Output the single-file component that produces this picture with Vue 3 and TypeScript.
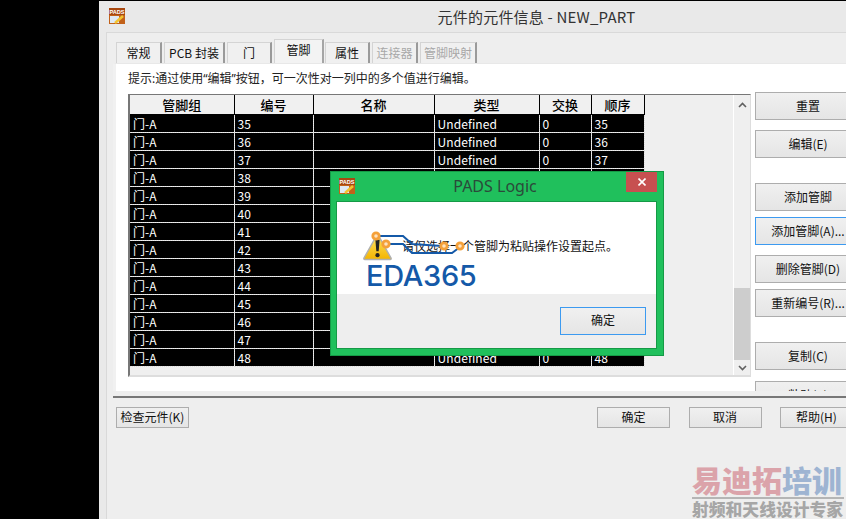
<script setup lang="ts">
interface Tab { label: string; width: number; active?: boolean; disabled?: boolean }
const tabs: Tab[] = [
  { label: '常规', width: 46 },
  { label: 'PCB 封装', width: 61 },
  { label: '门', width: 45 },
  { label: '管脚', width: 50, active: true },
  { label: '属性', width: 45 },
  { label: '连接器', width: 46, disabled: true },
  { label: '管脚映射', width: 57, disabled: true },
]
const columns = ['管脚组', '编号', '名称', '类型', '交换', '顺序']
const pins = Array.from({ length: 14 }, (_, i) => String(35 + i))
const sideButtons = [
  { label: '重置', cls: '' },
  { label: '编辑(E)', cls: 'g10' },
  { label: '添加管脚', cls: 'g25' },
  { label: '添加管脚(A)...', cls: 'g6 focus' },
  { label: '删除管脚(D)', cls: 'g10' },
  { label: '重新编号(R)...', cls: 'g6' },
  { label: '复制(C)', cls: 'g25' },
  { label: '粘贴(P)', cls: 'g11' },
]
</script>

<template>
  <div class="screen">
    <div class="backdrop"></div>
    <div class="window">
      <div class="titlebar">
        <svg class="pads" viewBox="0 0 16 16" width="16" height="16">
          <rect width="16" height="16" fill="#c2611a" />
          <rect x="0" y="0" width="16" height="7" fill="#a9480f" />
          <text x="8" y="6" text-anchor="middle" font-size="5.6" font-weight="700" fill="#fff" font-family="Liberation Sans, sans-serif">PADS</text>
          <rect x="1" y="8" width="9" height="7" fill="#dfe9f5" />
          <path d="M6 15 L14 8" stroke="#f4c430" stroke-width="2.5" />
        </svg>
        <span class="title">元件的元件信息 - NEW_PART</span>
      </div>
      <div class="client">
        <div class="tabs">
          <div
            v-for="t in tabs"
            :key="t.label"
            class="tab"
            :class="{ active: t.active, disabled: t.disabled }"
            :style="{ width: t.width + 'px' }"
          >{{ t.label }}</div>
        </div>
        <div class="panel">
          <div class="panel-body">
            <p class="hint">提示:通过使用“编辑”按钮，可一次性对一列中的多个值进行编辑。</p>
            <div class="content">
              <div class="frame">
                <div class="grid-area">
                  <table class="grid">
                    <colgroup>
                      <col class="c1" /><col class="c2" /><col class="c3" />
                      <col class="c4" /><col class="c5" /><col class="c6" />
                    </colgroup>
                    <thead>
                      <tr><th v-for="c in columns" :key="c">{{ c }}</th></tr>
                    </thead>
                    <tbody>
                      <tr v-for="p in pins" :key="p">
                        <td>门-A</td>
                        <td>{{ p }}</td>
                        <td></td>
                        <td>Undefined</td>
                        <td>0</td>
                        <td>{{ p }}</td>
                      </tr>
                    </tbody>
                  </table>
                </div>
                <div class="scrollbar">
                  <svg class="arrow up" viewBox="0 0 9 6" width="9" height="6"><path d="M1 5 L4.5 1.5 L8 5" fill="none" stroke="#606060" stroke-width="1.6" /></svg>
                  <div class="track"><div class="thumb"></div></div>
                  <svg class="arrow down" viewBox="0 0 9 6" width="9" height="6"><path d="M1 1 L4.5 4.5 L8 1" fill="none" stroke="#606060" stroke-width="1.6" /></svg>
                </div>
              </div>
              <div class="side">
                <button v-for="b in sideButtons" :key="b.label" class="btn side-btn" :class="b.cls">{{ b.label }}</button>
              </div>
            </div>
          </div>
        </div>
        <div class="foot">
          <button class="btn foot-btn">检查元件(K)</button>
          <div class="foot-right">
            <button class="btn foot-btn">确定</button>
            <button class="btn foot-btn">取消</button>
            <button class="btn foot-btn">帮助(H)</button>
          </div>
        </div>
      </div>
    </div>

    <div class="dialog">
      <div class="dlg-title">
        <svg class="pads" viewBox="0 0 16 16" width="16" height="16">
          <rect width="16" height="16" fill="#c2611a" />
          <rect x="0" y="0" width="16" height="7" fill="#a9480f" />
          <text x="8" y="6" text-anchor="middle" font-size="5.6" font-weight="700" fill="#fff" font-family="Liberation Sans, sans-serif">PADS</text>
          <rect x="1" y="8" width="9" height="7" fill="#dfe9f5" />
          <path d="M6 15 L14 8" stroke="#f4c430" stroke-width="2.5" />
        </svg>
        <span class="dlg-name">PADS Logic</span>
        <div class="close">
          <svg viewBox="0 0 8 8" width="8" height="8"><path d="M0.5 0.5 L7.5 7.5 M7.5 0.5 L0.5 7.5" stroke="#fff" stroke-width="1.6" /></svg>
        </div>
      </div>
      <div class="dlg-body">
        <div class="dlg-msg">
          <svg class="warn" viewBox="0 0 32 30" width="31" height="29">
            <defs>
              <linearGradient id="warnFill" x1="0" y1="0" x2="0" y2="1">
                <stop offset="0" stop-color="#ffe66a" />
                <stop offset="1" stop-color="#f3b400" />
              </linearGradient>
            </defs>
            <path d="M16 2 L30 27 Q30.500 28.500 29 28.500 L3 28.500 Q1.500 28.500 2 27 Z" fill="url(#warnFill)" stroke="#b0b0b0" stroke-width="1.500" />
            <path d="M13.800 8 L18.200 8 L17.200 20 L14.800 20 Z" fill="#222" />
            <circle cx="16" cy="24" r="2.200" fill="#222" />
          </svg>
          <span class="msg">请仅选择一个管脚为粘贴操作设置起点。</span>
        </div>
        <div class="dlg-actions"><button class="btn ok">确定</button></div>
      </div>
    </div>

    <div class="logo">
      <svg class="traces" viewBox="0 0 110 40" width="110" height="40">
        <path d="M6 7 H33 L42 15 L72 17" fill="none" stroke="#1459a8" stroke-width="2" />
        <path d="M16 15 H33 L42 24 H82 L90 18" fill="none" stroke="#1459a8" stroke-width="2" />
        <g fill="#fde3c0" stroke="#f5a13a" stroke-width="2.800">
          <circle cx="6" cy="7" r="3.200" />
          <circle cx="16" cy="15" r="3.200" />
          <circle cx="74" cy="17" r="3.200" />
          <circle cx="90" cy="17" r="3.200" />
        </g>
      </svg>
      <span class="logo-text">EDA365</span>
    </div>

    <div class="mark">
      <div class="mark-top"><span class="red">易迪拓</span><span class="blue">培训</span></div>
      <div class="mark-sub">射频和天线设计专家</div>
    </div>
  </div>
</template>

<style>
html, body { margin: 0; background: #000; }
</style>

<style scoped>
.screen {
  position: relative;
  width: 846px;
  height: 519px;
  overflow: hidden;
  display: flex;
  background: #000;
  font-family: "Noto Sans CJK SC", "Noto Sans", sans-serif;
  font-size: 12px;
  color: #111;
}
.backdrop { width: 99px; flex: none; }
.window {
  width: 747px;
  flex: none;
  margin-top: 1px;
  background: #e9e9e9;
  display: flex;
  flex-direction: column;
}
.titlebar {
  height: 31px;
  flex: none;
  position: relative;
  display: flex;
  align-items: center;
  justify-content: center;
}
.titlebar .pads { position: absolute; left: 10px; top: 7px; }
.title { font-size: 15px; letter-spacing: 0.2px; color: #333; margin-left: 128px; margin-top: -1px; }
.client {
  flex: 1;
  margin-left: 7px;
  background: #eee;
  border-top: 1px solid #d9d9d9;
  border-left: 1px solid #d9d9d9;
}
.tabs {
  display: flex;
  gap: 2px;
  height: 30px;
  align-items: flex-end;
  padding-left: 9px;
  box-sizing: border-box;
}
.tab {
  height: 21px;
  box-sizing: border-box;
  background: #f0f0f0;
  border: 1px solid #d4d4d4;
  border-right: 2px solid #9a9a9a;
  border-bottom: none;
  text-align: center;
  line-height: 19px;
}
.tab.active {
  height: 24px;
  background: #f3f3f3;
  line-height: 19px;
  border-right-color: #a5a5a5;
  margin: 0 -1px 0 0;
  z-index: 1;
  padding-bottom: 3px;
}
.tab.disabled { color: #a8a8a8; }
.panel {
  margin-left: 6px;
  padding-bottom: 5px;
  border-bottom: 2px solid #777;
}
.panel-body {
  height: 328px;
  overflow: hidden;
  background: #fff;
  border-left: 3px solid #f1f1f1;
  border-top: 1px solid #e8e8e8;
  box-sizing: border-box;
  padding-left: 12px;
}
.hint {
  margin: 0;
  padding-top: 6px;
  height: 22px;
  line-height: 17px;
  color: #222;
  white-space: nowrap;
  font-family: "Noto Sans", "Noto Sans CJK SC", sans-serif;
}
.content { display: flex; gap: 4px; }
.frame {
  width: 623px;
  height: 283px;
  margin-top: 2px;
  flex: none;
  box-sizing: border-box;
  background: #efefef;
  border-top: 1px solid #777;
  border-left: 2px solid #777;
  border-right: 1px solid #ddd;
  border-bottom: 2px solid #ddd;
  display: flex;
}
.grid-area { flex: 1; min-width: 0; }
.grid {
  border-collapse: collapse;
  table-layout: fixed;
  width: 514px;
}
.c1 { width: 104px; }
.c2 { width: 79px; }
.c3 { width: 121px; }
.c4 { width: 105px; }
.c5 { width: 52px; }
.c6 { width: 53px; }
.grid th {
  height: 19px;
  padding: 0;
  background: #f0f0f0;
  border-right: 1px solid #000;
  border-bottom: 1px solid #000;
  font-weight: 500;
  font-size: 13px;
  line-height: 18px;
  color: #000;
}
.grid td {
  height: 17px;
  padding: 0 0 0 3px;
  background: #000;
  color: #fff;
  border-right: 1px dotted #ddd;
  border-bottom: 1px dotted #ddd;
  line-height: 17px;
  letter-spacing: 0.1px;
  white-space: nowrap;
  overflow: hidden;
}
.scrollbar {
  width: 16px;
  flex: none;
  border-left: 1px solid #fff;
  display: flex;
  flex-direction: column;
  align-items: center;
}
.arrow { flex: none; }
.arrow.up { margin: 7px 0 7px; }
.arrow.down { margin: 5px 0 4px; }
.track { flex: 1; width: 100%; display: flex; flex-direction: column; justify-content: flex-end; }
.thumb { height: 72px; background: #cdcdcd; }
.side { width: 106px; flex: none; display: flex; flex-direction: column; }
.btn {
  font: inherit;
  color: #111;
  padding: 0 0 1px;
  border: 1px solid #adadad;
  background: linear-gradient(#f0f0f0, #e5e5e5);
  box-sizing: border-box;
  white-space: nowrap;
}
.side-btn { height: 28px; flex: none; }
.g6 { margin-top: 6px; }
.g10 { margin-top: 10px; }
.g11 { margin-top: 11px; }
.g25 { margin-top: 25px; }
.focus { border-color: #3c9af0; }
.foot {
  width: 737px;
  margin: 9px 0 0 9px;
  display: flex;
  justify-content: space-between;
}
.foot-right { display: flex; gap: 18.5px; }
.foot-btn { width: 73px; height: 21px; line-height: 18px; }
.dialog {
  position: absolute;
  left: 330px;
  top: 171px;
  width: 334px;
  height: 185px;
  box-sizing: border-box;
  background: #20c05c;
  border: 1px solid #159a46;
  display: flex;
  flex-direction: column;
  z-index: 2;
}
.dlg-title {
  height: 29px;
  flex: none;
  position: relative;
  text-align: center;
}
.dlg-title .pads { position: absolute; left: 8px; top: 6px; }
.dlg-name {
  font-family: "Noto Sans", sans-serif;
  font-size: 16px;
  line-height: 28px;
  color: #2b4a3a;
  margin-right: 4px;
}
.close {
  position: absolute;
  right: 6px;
  top: 0;
  width: 31px;
  height: 20px;
  background: #c75050;
  display: flex;
  align-items: center;
  justify-content: center;
}
.dlg-body {
  width: 321px;
  height: 148px;
  margin-left: 5px;
  flex: none;
  box-sizing: border-box;
  border: 1px solid #159a46;
  background: #fff;
  display: flex;
  flex-direction: column;
}
.dlg-msg {
  height: 92px;
  flex: none;
  display: flex;
  align-items: flex-start;
  padding: 30px 0 0 25px;
  box-sizing: border-box;
}
.warn { flex: none; }
.msg { margin: 5px 0 0 9px; color: #111; white-space: nowrap; }
.dlg-actions {
  flex: 1;
  background: #eee;
  display: flex;
  justify-content: flex-end;
  align-items: flex-start;
  padding: 13px 10px 0 0;
}
.ok {
  width: 86px;
  height: 28px;
  border-color: #3c9af0;
  padding-bottom: 3px;
}
.logo {
  position: absolute;
  left: 370px;
  top: 229px;
  width: 110px;
  height: 60px;
  z-index: 3;
}
.traces { position: absolute; left: 0; top: 0; }
.logo-text {
  position: absolute;
  left: -4px;
  top: 29px;
  font-family: Inter, sans-serif;
  font-weight: 500;
  font-size: 29px;
  line-height: 36px;
  letter-spacing: -0.3px;
  color: #1459a8;
}
.mark {
  position: absolute;
  left: 692px;
  top: 461px;
  width: 152px;
  z-index: 1;
  font-weight: 900;
}
.mark-top {
  font-size: 30px;
  line-height: 36px;
  white-space: nowrap;
  border-bottom: 2px solid #b5b5b5;
}
.red { color: #dba3aa; }
.blue { color: #9eb4d2; }
.mark-sub {
  font-size: 16.8px;
  line-height: 18px;
  padding-top: 1px;
  color: #a6a6a6;
  white-space: nowrap;
}
</style>
